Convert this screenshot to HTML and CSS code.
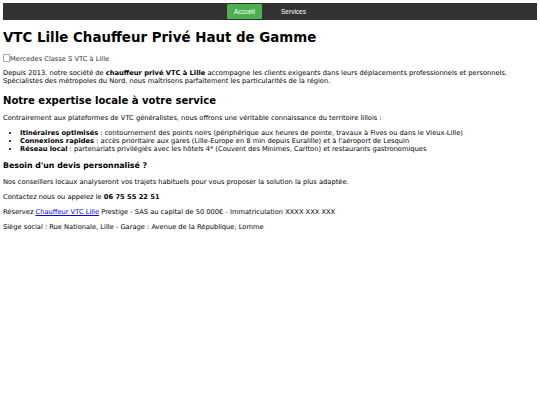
FILE: index.html
```html
<!DOCTYPE html>
<html lang="fr">
<head>
<meta charset="utf-8">
<title>VTC Lille Chauffeur Privé Haut de Gamme</title>
<link rel="stylesheet" href="styles.css">
</head>
<body>
<nav class="topnav">
  <a class="nav-link active" href="#">Accueil</a>
  <a class="nav-link" href="#">Services</a>
</nav>
<h1 class="title">VTC Lille Chauffeur Privé Haut de Gamme</h1>
<p class="img-alt"><span class="broken-icon"></span>Mercedes Classe S VTC à Lille</p>
<p class="text">Depuis 2013, notre société de <strong>chauffeur privé VTC à Lille</strong> accompagne les clients exigeants dans leurs déplacements professionnels et personnels. Spécialistes des métropoles du Nord, nous maîtrisons parfaitement les particularités de la région.</p>
<h2 class="section">Notre expertise locale à votre service</h2>
<p class="text">Contrairement aux plateformes de VTC généralistes, nous offrons une véritable connaissance du territoire lillois :</p>
<ul class="list">
  <li><strong>Itinéraires optimisés</strong> : contournement des points noirs (périphérique aux heures de pointe, travaux à Fives ou dans le Vieux-Lille)</li>
  <li><strong>Connexions rapides</strong> : accès prioritaire aux gares (Lille-Europe en 8 min depuis Euralille) et à l'aéroport de Lesquin</li>
  <li><strong>Réseau local</strong> : partenariats privilégiés avec les hôtels 4* (Couvent des Minimes, Carlton) et restaurants gastronomiques</li>
</ul>
<h3 class="sub">Besoin d'un devis personnalisé ?</h3>
<p class="text">Nos conseillers locaux analyseront vos trajets habituels pour vous proposer la solution la plus adaptée.</p>
<p class="text">Contactez nous ou appelez le <strong>06 75 55 22 51</strong></p>
<p class="text">Réservez <a class="link" href="#">Chauffeur VTC Lille</a> Prestige - SAS au capital de 50 000€ - Immatriculation XXXX XXX XXX</p>
<p class="text">Siège social : Rue Nationale, Lille - Garage : Avenue de la République, Lomme</p>
</body>
</html>
```

FILE: styles.css
```css
html { background: #fff; }
body {
  margin: 3px;
  font-family: "DejaVu Sans", Verdana, sans-serif;
  font-size: 6.7px;
  line-height: 8px;
  color: #000;
}
.topnav {
  background: #333;
  display: flex;
  justify-content: center;
  padding: 1px 0;
  line-height: normal;
}
.nav-link {
  font-family: "Liberation Sans", Arial, sans-serif;
  font-size: 6.5px;
  color: #fff;
  text-decoration: none;
  padding: 4px 7px;
  margin: 0 6px;
  border-radius: 1px;
}
.nav-link.active { background: #4caf50; }
.title {
  font-size: 2em;
  line-height: normal;
  margin: 10px 0 9px;
}
.img-alt { margin: 6px 0; color: #333; }
.broken-icon {
  display: inline-block;
  width: 5px;
  height: 6px;
  border: 1px solid #aaa;
  vertical-align: -1px;
}
.text { margin: 6px 0 7px; }
.section { font-size: 1.5em; line-height: normal; margin: 10px 0 8px; }
.list { margin: 6.7px 0; padding-left: 17px; }
.sub { font-size: 1.17em; line-height: normal; margin: 8px 0; }
.link { color: #00e; }
```
